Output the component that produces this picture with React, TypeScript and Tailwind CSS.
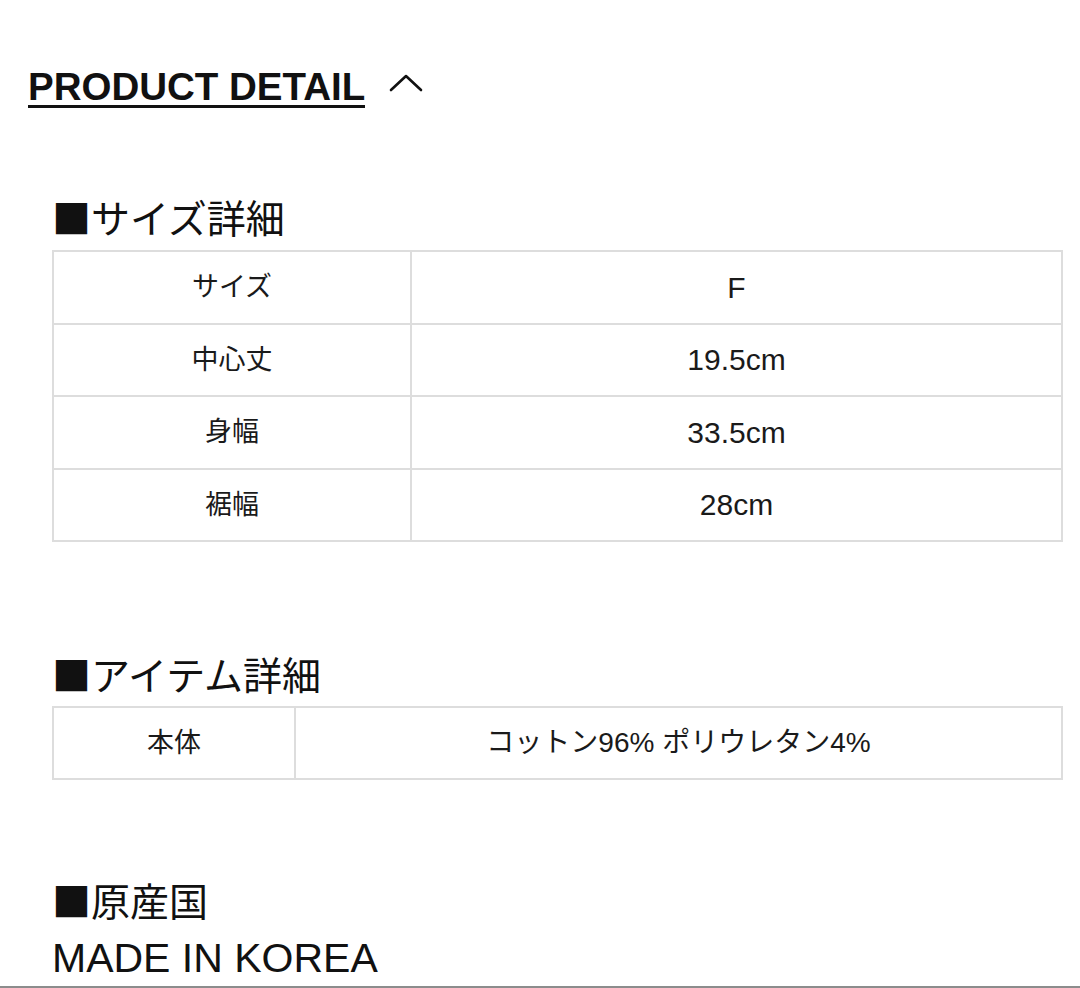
import React from 'react'

const sizeRows = [
  { label: 'サイズ', value: 'F' },
  { label: '中心丈', value: '19.5cm' },
  { label: '身幅', value: '33.5cm' },
  { label: '裾幅', value: '28cm' },
]

function SectionTitle({ children, className = '' }: { children: React.ReactNode; className?: string }) {
  return (
    <h2 className={`font-['Noto_Sans_CJK_JP',sans-serif] text-[39px] leading-[48px] font-normal text-[#111] ml-[52px] ${className}`}>
      {children}
    </h2>
  )
}

export default function App() {
  return (
    <div className="min-h-screen flex flex-col bg-white font-['Liberation_Sans','Noto_Sans_CJK_JP',sans-serif] text-[#1a1a1a]">
      {/* accordion header */}
      <div className="flex items-center pt-[69px] pl-[28px]">
        <span className="inline-block text-[38.5px] leading-[36px] font-bold text-[#111] border-b-[3px] border-[#111]">
          PRODUCT DETAIL
        </span>
        <svg className="ml-[24px] -mt-[12px]" width="34" height="18" viewBox="0 0 34 18" fill="none">
          <path d="M2 16 L17 2 L32 16" stroke="#111" strokeWidth="2.6" strokeLinecap="round" strokeLinejoin="round" />
        </svg>
      </div>

      {/* size table */}
      <SectionTitle className="mt-[84px]">■サイズ詳細</SectionTitle>
      <div className="mt-[10px] ml-[52px] mr-[17px] grid grid-cols-[356px_1fr] gap-[2px] p-[2px] bg-[#dddddd]">
        {sizeRows.map((r) => (
          <React.Fragment key={r.label}>
            <div className="h-[70.5px] bg-white flex items-center justify-center text-[27px]">{r.label}</div>
            <div className="h-[70.5px] bg-white flex items-center justify-center text-[30px]">{r.value}</div>
          </React.Fragment>
        ))}
      </div>

      {/* item table */}
      <SectionTitle className="mt-[107px]">■アイテム詳細</SectionTitle>
      <div className="mt-[9px] ml-[52px] mr-[17px] grid grid-cols-[240px_1fr] gap-[2px] p-[2px] bg-[#dddddd]">
        <div className="h-[70px] bg-white flex items-center justify-center text-[27px]">本体</div>
        <div className="h-[70px] bg-white flex items-center justify-center text-[28px]">コットン96% ポリウレタン4%</div>
      </div>

      {/* origin */}
      <SectionTitle className="mt-[95px]">■原産国</SectionTitle>
      <p className="ml-[52px] mt-[11px] text-[41px] leading-[48px] text-[#111]">MADE IN KOREA</p>

      <div className="mt-auto h-[2px] bg-[#8c8c8c]" />
    </div>
  )
}
